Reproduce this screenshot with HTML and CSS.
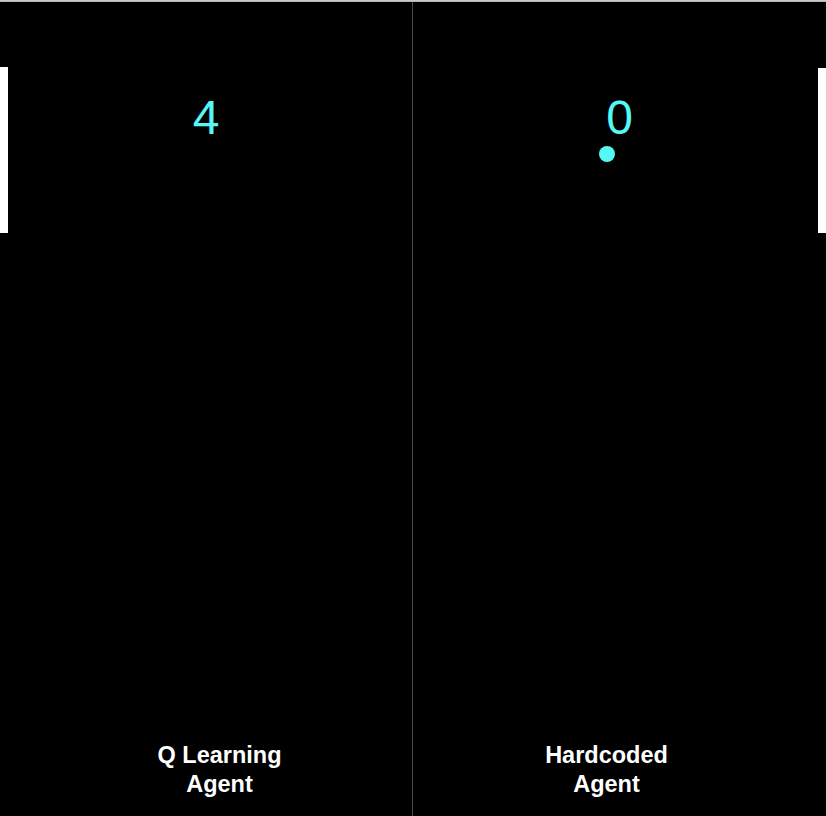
FILE: index.html
```html
<!DOCTYPE html>
<html>
<head>
<meta charset="utf-8">
<title>Pong</title>
<link rel="stylesheet" href="styles.css">
</head>
<body>
<div class="topbar"></div>
<div class="court">
  <div class="half"><div class="score">4</div></div>
  <div class="divider"></div>
  <div class="half"><div class="score">0</div></div>
  <div class="paddle paddle-left"></div>
  <div class="paddle paddle-right"></div>
  <div class="ball"></div>
  <div class="labels">
    <div class="label">Q Learning<br>Agent</div>
    <div class="label">Hardcoded<br>Agent</div>
  </div>
</div>
</body>
</html>
```
FILE: styles.css
```css
html, body {
  margin: 0;
  padding: 0;
  background: #000;
  width: 826px;
  height: 816px;
  overflow: hidden;
  font-family: "Liberation Sans", Arial, sans-serif;
}
.topbar {
  height: 2px;
  background: linear-gradient(#d4d4d4, #a9a9a9);
}
.court {
  position: relative;
  display: grid;
  grid-template-columns: 412px 1px 413px;
  height: 814px;
}
.half {
  display: flex;
  justify-content: center;
  padding-top: 92px;
}
.divider {
  background: #4a4a4a;
}
.score {
  color: #55f8f4;
  font-size: 48px;
  line-height: 48px;
  height: 48px;
}
.paddle {
  position: absolute;
  width: 8px;
  background: #fff;
}
.paddle-left {
  left: 0;
  top: 65px;
  height: 166px;
}
.paddle-right {
  right: 0;
  top: 66px;
  height: 165px;
}
.ball {
  position: absolute;
  left: 599px;
  top: 144px;
  width: 16px;
  height: 16px;
  border-radius: 50%;
  background: #55f8f4;
}
.labels {
  position: absolute;
  left: 26px;
  right: 26px;
  bottom: 17px;
  display: flex;
}
.label {
  flex: 1;
  text-align: center;
  color: #fff;
  font-weight: bold;
  font-size: 23.5px;
  line-height: 29px;
}
```
